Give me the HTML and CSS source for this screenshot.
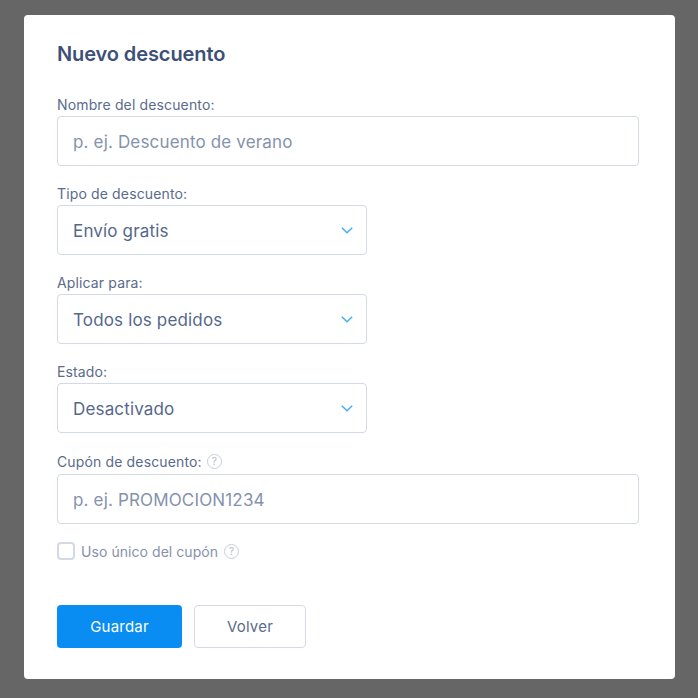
FILE: index.html
```html
<!DOCTYPE html>
<html lang="es">
<head>
<meta charset="utf-8">
<title>Nuevo descuento</title>
<link rel="stylesheet" href="styles.css">
</head>
<body>
<main class="card">
  <h1 class="title">Nuevo descuento</h1>
  <div class="field">
    <label class="label">Nombre del descuento:</label>
    <div class="control wide placeholder">p. ej. Descuento de verano</div>
  </div>
  <div class="field">
    <label class="label">Tipo de descuento:</label>
    <div class="control select"><span>Envío gratis</span>
      <svg class="chev" viewBox="0 0 12 7"><path d="M.8.8 6 5.8 11.2.8"/></svg></div>
  </div>
  <div class="field">
    <label class="label">Aplicar para:</label>
    <div class="control select"><span>Todos los pedidos</span>
      <svg class="chev" viewBox="0 0 12 7"><path d="M.8.8 6 5.8 11.2.8"/></svg></div>
  </div>
  <div class="field">
    <label class="label">Estado:</label>
    <div class="control select"><span>Desactivado</span>
      <svg class="chev" viewBox="0 0 12 7"><path d="M.8.8 6 5.8 11.2.8"/></svg></div>
  </div>
  <div class="field coupon">
    <label class="label with-help">Cupón de descuento:
      <span class="help">?</span></label>
    <div class="control wide placeholder">p. ej. PROMOCION1234</div>
  </div>
  <div class="check-row">
    <span class="checkbox"></span>
    <span class="check-label">Uso único del cupón</span>
    <span class="help">?</span>
  </div>
  <div class="actions">
    <button class="btn primary">Guardar</button>
    <button class="btn secondary">Volver</button>
  </div>
</main>
</body>
</html>
```
FILE: styles.css
```css
* { box-sizing: border-box; }
html, body { margin: 0; height: 100%; }
body {
  background: #666667;
  font-family: Inter, "Noto Sans", sans-serif;
  color: #5a6b8c;
  padding: 15px 23px 19px 24px;
}
.card {
  background: #fff;
  border-radius: 4px;
  height: 664px;
  padding: 27px 36px 0 33px;
}
.title {
  margin: 0 0 30px;
  font-size: 20px;
  line-height: 24px;
  font-weight: 600;
  letter-spacing: -.1px;
  color: #3d5078;
}
.field { margin-bottom: 19px; }
.label {
  display: block;
  font-size: 14px;
  line-height: 17px;
  height: 20px;
  letter-spacing: .14px;
  color: #5a6b8c;
}
.with-help { display: flex; align-items: flex-start; gap: 5px; height: 22px; padding-top: 1px; }
.with-help .help { margin-top: 1px; }
.control {
  height: 50px;
  border: 1px solid #d4d9e6;
  border-radius: 4px;
  padding: 2px 15px 0;
  display: flex;
  align-items: center;
  font-size: 17px;
  letter-spacing: .16px;
  color: #55688c;
}
.wide { width: 582px; }
.placeholder { color: #8592ad; }
.select { width: 310px; justify-content: space-between; }
.chev { width: 12px; height: 7px; fill: none; stroke: #45aef5; stroke-width: 1.5; margin: -2px -2px 0 0; }
.coupon { margin-bottom: 18px; }
.help {
  width: 15px;
  height: 15px;
  border: 1px solid #c9ced9;
  border-radius: 50%;
  color: #b5bbc9;
  font-size: 10px;
  line-height: 13px;
  letter-spacing: 0;
  text-align: center;
  flex: none;
}
.check-row { display: flex; align-items: center; height: 18px; font-size: 14px; letter-spacing: .06px; color: #8592ad; }
.checkbox {
  width: 18px;
  height: 18px;
  border: 2px solid #d4d9e6;
  border-radius: 4px;
  margin-right: 6px;
}
.check-label { margin-right: 6px; }
.actions { display: flex; gap: 12px; margin-top: 45px; }
.btn {
  height: 43px;
  border-radius: 4px;
  font: 15px Inter, "Noto Sans", sans-serif;
  letter-spacing: .2px;
  padding: 0;
}
.primary { width: 125px; background: #0a8df2; color: #fff; border: 0; }
.secondary { width: 112px; background: #fff; color: #5a6b8c; border: 1px solid #d4d9e6; }
```
